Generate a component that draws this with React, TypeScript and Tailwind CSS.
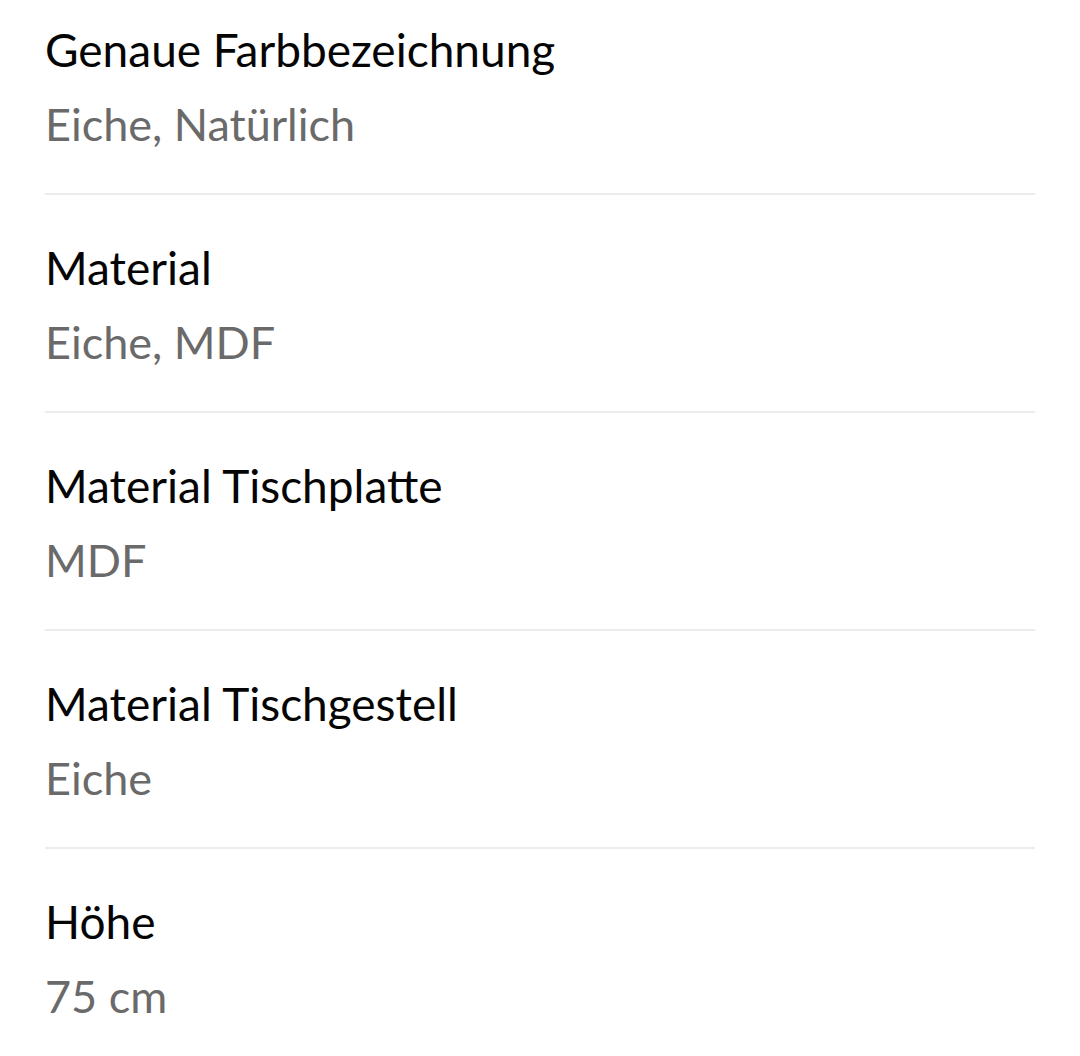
const rows = [
  { label: 'Genaue Farbbezeichnung', value: 'Eiche, Natürlich' },
  { label: 'Material', value: 'Eiche, MDF' },
  { label: 'Material Tischplatte', value: 'MDF' },
  { label: 'Material Tischgestell', value: 'Eiche' },
  { label: 'Höhe', value: '75 cm' },
];

export default function App() {
  return (
    <div className="flex min-h-[1056px] flex-col gap-[23px] bg-white px-[45px] font-['Lato',sans-serif]">
      {rows.map((r, i) => (
        <div
          key={r.label}
          className={
            i < rows.length - 1
              ? 'flex h-[195px] flex-col border-b-2 border-[#ececec] pt-[20px]'
              : 'flex h-[195px] flex-col pt-[20px]'
          }
        >
          <span className="text-[46px] leading-[60px] text-[#050505]">{r.label}</span>
          <span className="mt-[14px] text-[45px] leading-[60px] text-[#6a6a6a]">{r.value}</span>
        </div>
      ))}
    </div>
  );
}
